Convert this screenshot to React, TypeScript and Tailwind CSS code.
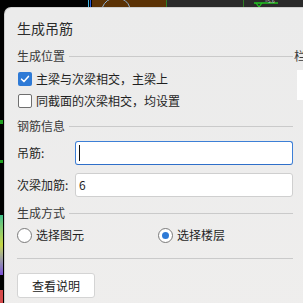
import React from "react";

const font = { fontFamily: '"Noto Sans CJK SC", "Noto Sans", sans-serif' };

function SectionHeader({ label }: { label: string }) {
  return (
    <div className="mt-2 flex h-5 items-center gap-1">
      <span className="shrink-0 text-[12px] leading-5 text-[#3a3a3a]">{label}</span>
      <div className="h-px flex-1 bg-[#cacaca]" />
    </div>
  );
}

function Checkbox({ checked, label }: { checked: boolean; label: string }) {
  return (
    <label className="flex h-5 items-center gap-[4px] pl-px">
      {checked ? (
        <span className="flex size-[14px] items-center justify-center rounded-[2px] bg-[#2e7ad6]">
          <svg viewBox="0 0 14 14" className="size-[12px]">
            <path d="M3 7.2 L5.8 10 L11 4" fill="none" stroke="white" strokeWidth="1.8" strokeLinecap="round" strokeLinejoin="round" />
          </svg>
        </span>
      ) : (
        <span className="size-[14px] rounded-[2px] border border-[#6f6f6f] bg-white" />
      )}
      <span className="text-[12px] leading-5 text-[#1f1f1f]">{label}</span>
    </label>
  );
}

function Radio({ checked, label }: { checked: boolean; label: string }) {
  return (
    <label className="flex h-5 items-center gap-[4px]">
      <span className="flex size-[15px] items-center justify-center rounded-full border border-[#7a7a7a] bg-white">
        {checked && <span className="size-[7px] rounded-full bg-[#2e7ad6]" />}
      </span>
      <span className="text-[12px] leading-5 text-[#1f1f1f]">{label}</span>
    </label>
  );
}

export default function App() {
  return (
    <div className="relative h-[303px] w-[303px] overflow-hidden bg-black" style={font}>
      {/* cad canvas behind the dialog */}
      <div className="absolute left-[88px] top-0 h-[8px] w-[1px] bg-[#3fb6e6]" />
      <div className="absolute left-[90px] top-0 h-[8px] w-[1px] bg-[#2c5cd8]" />
      <div className="absolute left-[92px] top-0 h-[8px] w-[74px] bg-[#5b3205]" />
      <svg className="absolute left-[100px] top-0" width="34" height="8" viewBox="0 0 34 8">
        <path d="M2 8 Q6 -2 16 -2 Q27 -2 30 8" fill="none" stroke="#8fb3d6" strokeWidth="1" />
      </svg>
      <div className="absolute left-[166px] top-0 h-[8px] w-[1px] bg-[#2e7b25]" />
      <div className="absolute left-[167px] top-0 h-[8px] w-[136px] bg-[#2b2b2b]" />
      <div className="absolute left-[243px] top-0 h-[8px] w-[1px] bg-[#2e7b25]" />
      <svg className="absolute left-[252px] top-0" width="30" height="8" viewBox="0 0 30 8">
        <path d="M2 3 H26" stroke="#22c522" strokeWidth="1.5" />
        <path d="M4 3 L7 7 L10 3" fill="none" stroke="#22c522" strokeWidth="1.2" />
        <text x="13" y="3" fontSize="5" fill="#d8d8d8">=5.6</text>
      </svg>
      <div className="absolute left-0 top-[120px] h-[4px] w-[3px] bg-[#1fa01f]" />
      <div className="absolute left-0 top-[160px] h-[3px] w-[3px] bg-[#1fa01f]" />
      <div className="absolute left-0 top-[215px] h-[60px] w-[3px] bg-gradient-to-b from-[#3ac08a] via-[#c6d642] to-[#7b4cd6]" />
      <div className="absolute left-0 top-[290px] h-[13px] w-[3px] bg-[#d64b4b]" />

      {/* dialog window */}
      <div className="absolute left-[4px] top-[7px] h-[310px] w-[340px] rounded-tl-[7px] border-l border-t border-[#cfcfcf] bg-gradient-to-b from-[#ebebeb] to-[#efeeed]">
        <div className="flex">
          <div className="flex w-[288px] shrink-0 flex-col pl-[12px] pt-[10px]">
            <div className="h-5 text-[14px] leading-5 text-[#2b2b2b]">生成吊筋</div>

            <SectionHeader label="生成位置" />
            <div className="mt-[3px]">
              <Checkbox checked label="主梁与次梁相交，主梁上" />
            </div>
            <div className="mt-[2px]">
              <Checkbox checked={false} label="同截面的次梁相交，均设置" />
            </div>

            <div className="mt-[-3px]">
              <SectionHeader label="钢筋信息" />
            </div>
            <div className="mt-[5px] flex h-6 items-center">
              <span className="w-[58px] shrink-0 text-[12px] text-[#1f1f1f]">吊筋:</span>
              <div className="relative flex h-6 flex-1 items-center rounded-[3px] border border-[#3d7fd6] border-b-[#2f6fc9] bg-white pl-[3px]">
                <span className="h-[16px] w-px bg-[#111]" />
              </div>
            </div>
            <div className="mt-[8px] flex h-6 items-center">
              <span className="w-[58px] shrink-0 text-[12px] text-[#1f1f1f]">次梁加筋:</span>
              <div className="flex h-6 flex-1 items-center rounded-[3px] border border-[#cfcfcf] bg-white pl-[3px] text-[12px] text-[#1f1f1f]">
                6
              </div>
            </div>

            <div className="mt-[-2px]">
              <SectionHeader label="生成方式" />
            </div>
            <div className="mt-[2px] flex h-5 items-center">
              <div className="w-[141px]">
                <Radio checked={false} label="选择图元" />
              </div>
              <Radio checked label="选择楼层" />
            </div>

            <div className="mt-[13px] h-px bg-[#cacaca]" />

            <button className="mt-[14px] flex h-[25px] w-[78px] items-center justify-center rounded-[3px] border border-[#d4d4d4] bg-white text-[12px] text-[#222]">
              查看说明
            </button>
          </div>

          <div className="flex flex-col pl-[1px] pt-[38px]">
            <span className="text-[12px] leading-5 text-[#3a3a3a]">栏</span>
            <div className="ml-[3px] mt-[4px] h-[30px] w-[40px] bg-white" />
          </div>
        </div>
      </div>
    </div>
  );
}
